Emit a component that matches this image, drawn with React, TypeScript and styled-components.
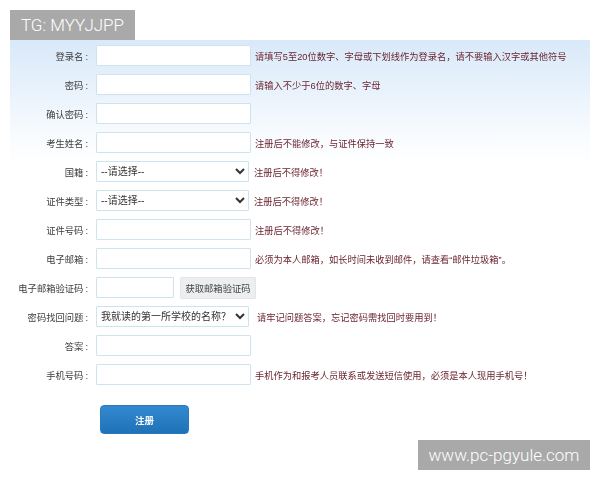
import React from "react";
import styled, { createGlobalStyle } from "styled-components";

const Global = createGlobalStyle`
  html, body { margin: 0; padding: 0; background: #fff; }
  body { font-family: "Liberation Sans", "Noto Sans CJK SC", sans-serif; }
`;

const Page = styled.div`
  position: relative;
  width: 600px;
  height: 480px;
  overflow: hidden;
  background: #fff;
`;

const Panel = styled.form`
  position: absolute;
  left: 10px;
  top: 40px;
  width: 580px;
  height: 400px;
  box-sizing: border-box;
  padding-top: 1px;
  background: linear-gradient(to bottom, #d9e9f9 0, #eaf3fc 55px, #f8fbfe 95px, #ffffff 125px);
  display: flex;
  flex-direction: column;
  filter: blur(0.4px);
`;

const Row = styled.div`
  display: flex;
  align-items: center;
  height: 29px;
  flex: none;
`;

const Label = styled.label`
  width: 78px;
  flex: none;
  margin-right: 8px;
  text-align: right;
  font-size: 9.3px;
  color: #3c3c3c;
  white-space: nowrap;
`;

const Colon = styled.span`
  margin-left: 2px;
`;

const TextInput = styled.input<{ $w?: number }>`
  width: ${(p) => p.$w ?? 155}px;
  height: 21px;
  box-sizing: border-box;
  flex: none;
  background: #fff;
  border: 1px solid #cfe3ee;
  border-radius: 1px;
  outline: none;
  padding: 0 4px;
`;

const Select = styled.select<{ $w?: number }>`
  width: ${(p) => p.$w ?? 153}px;
  height: 21px;
  box-sizing: border-box;
  flex: none;
  background: #fff;
  border: 1px solid #cfe3ee;
  border-radius: 1px;
  font-family: inherit;
  font-size: 10px;
  color: #333;
  padding: 0;
  outline: none;
`;

const Note = styled.span<{ $gap?: number }>`
  margin-left: ${(p) => p.$gap ?? 4}px;
  font-size: 9.25px;
  color: #6a2530;
  white-space: nowrap;
`;

const CodeButton = styled.button`
  width: 76px;
  height: 22px;
  margin-left: 6px;
  flex: none;
  box-sizing: border-box;
  padding: 0;
  border: 1px solid #e2e6e8;
  border-radius: 1px;
  background: #ecefef;
  font-family: inherit;
  font-size: 9.3px;
  color: #444;
`;

const Actions = styled.div`
  padding: 16px 0 0 90px;
`;

const Submit = styled.button`
  display: block;
  width: 89px;
  height: 29px;
  padding: 0;
  border: 1px solid #2a78bd;
  border-radius: 4px;
  background: linear-gradient(to bottom, #3389d0, #1f72b8);
  color: #fff;
  font-family: inherit;
  font-size: 9.5px;
  font-weight: 700;
`;

const Badge = styled.div<{ $left: number; $top: number; $w: number; $h: number; $size: number }>`
  position: absolute;
  left: ${(p) => p.$left}px;
  top: ${(p) => p.$top}px;
  width: ${(p) => p.$w}px;
  height: ${(p) => p.$h}px;
  display: flex;
  align-items: center;
  justify-content: center;
  background: #a9a9a9;
  color: #fff;
  font-family: Roboto, "Liberation Sans", sans-serif;
  font-weight: 300;
  font-size: ${(p) => p.$size}px;
  white-space: nowrap;
`;

type Field = {
  label: string;
  kind: "input" | "select" | "code";
  value?: string;
  note?: string;
  gap?: number;
};

const fields: Field[] = [
  { label: "登录名", kind: "input", note: "请填写5至20位数字、字母或下划线作为登录名，请不要输入汉字或其他符号" },
  { label: "密码", kind: "input", note: "请输入不少于6位的数字、字母" },
  { label: "确认密码", kind: "input" },
  { label: "考生姓名", kind: "input", note: "注册后不能修改，与证件保持一致" },
  { label: "国籍", kind: "select", value: "--请选择--", gap: 5, note: "注册后不得修改！" },
  { label: "证件类型", kind: "select", value: "--请选择--", gap: 5, note: "注册后不得修改！" },
  { label: "证件号码", kind: "input", note: "注册后不得修改！" },
  { label: "电子邮箱", kind: "input", note: "必须为本人邮箱，如长时间未收到邮件，请查看“邮件垃圾箱”。" },
  { label: "电子邮箱验证码", kind: "code" },
  { label: "密码找回问题", kind: "select", value: "我就读的第一所学校的名称？", gap: 8, note: "请牢记问题答案，忘记密码需找回时要用到！" },
  { label: "答案", kind: "input" },
  { label: "手机号码", kind: "input", note: "手机作为和报考人员联系或发送短信使用，必须是本人现用手机号！" },
];

export default function App() {
  return (
    <Page>
      <Global />
      <Panel>
        {fields.map((f) => (
          <Row key={f.label}>
            <Label>
              {f.label}
              <Colon>:</Colon>
            </Label>
            {f.kind === "input" && <TextInput type="text" />}
            {f.kind === "select" && (
              <Select defaultValue={f.value}>
                <option>{f.value}</option>
              </Select>
            )}
            {f.kind === "code" && (
              <>
                <TextInput type="text" $w={78} />
                <CodeButton type="button">获取邮箱验证码</CodeButton>
              </>
            )}
            {f.note && <Note $gap={f.gap}>{f.note}</Note>}
          </Row>
        ))}
        <Actions>
          <Submit type="button">注册</Submit>
        </Actions>
      </Panel>
      <Badge $left={10} $top={10} $w={125} $h={30} $size={17}>TG: MYYJJPP</Badge>
      <Badge $left={418} $top={440} $w={172} $h={30} $size={17}>www.pc-pgyule.com</Badge>
    </Page>
  );
}
